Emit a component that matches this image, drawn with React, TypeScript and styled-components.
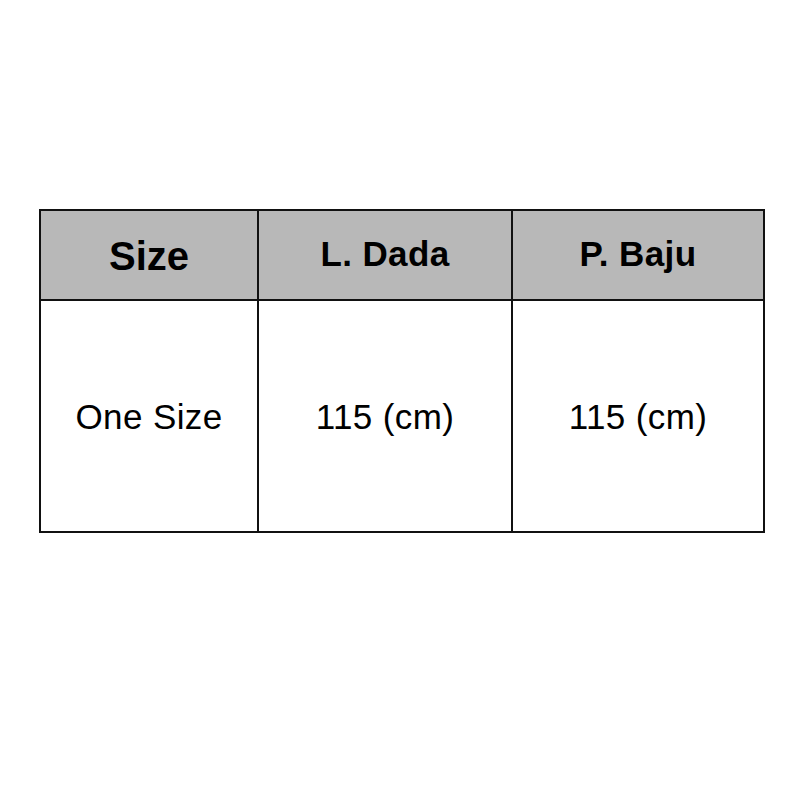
import styled, { createGlobalStyle } from 'styled-components';

const GlobalStyle = createGlobalStyle`
  html, body {
    margin: 0;
    padding: 0;
    background: #ffffff;
  }
  body {
    font-family: 'Liberation Sans', Arial, sans-serif;
    color: #000;
  }
`;

const Page = styled.div`
  width: 800px;
  height: 800px;
  padding: 209px 0 0 39px;
  box-sizing: border-box;
`;

const SizeTable = styled.div`
  display: grid;
  grid-template-columns: 218px 254px 252px;
  grid-template-rows: 90px 232px;
  width: max-content;
  border-left: 2px solid #111;
  border-top: 2px solid #111;
`;

const Cell = styled.div<{ $head?: boolean; $big?: boolean }>`
  display: flex;
  align-items: center;
  justify-content: center;
  border-right: 2px solid #111;
  border-bottom: 2px solid #111;
  background: ${({ $head }) => ($head ? '#b8b8b8' : '#ffffff')};
  font-weight: ${({ $head }) => ($head ? 700 : 400)};
  font-size: ${({ $big }) => ($big ? '40px' : '35px')};
  letter-spacing: ${({ $big }) => ($big ? '0' : '0.4px')};
  padding: ${({ $big, $head }) => ($big ? '2px 0 0' : $head ? '0 0 4px' : '0')};
  line-height: 1;
`;

const headers = ['L. Dada', 'P. Baju'];
const values = ['One Size', '115 (cm)', '115 (cm)'];

export default function App() {
  return (
    <>
      <GlobalStyle />
      <Page>
        <SizeTable>
          <Cell $head $big>
            Size
          </Cell>
          {headers.map((h) => (
            <Cell key={h} $head>
              {h}
            </Cell>
          ))}
          {values.map((v, i) => (
            <Cell key={i}>{v}</Cell>
          ))}
        </SizeTable>
      </Page>
    </>
  );
}
